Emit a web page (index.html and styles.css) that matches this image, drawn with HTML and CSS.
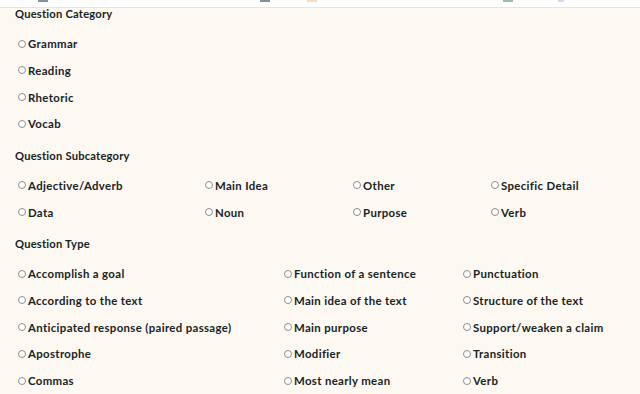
FILE: index.html
```html
<!DOCTYPE html>
<html lang="en">
<head>
<meta charset="utf-8">
<title>Question filters</title>
<link rel="stylesheet" href="styles.css">
</head>
<body>
<div class="topbar">
  <span class="mark mark-slate m1"></span>
  <span class="mark mark-slate m2"></span>
  <span class="mark mark-peach m3"></span>
  <span class="mark mark-green m4"></span>
  <span class="mark mark-blue m5"></span>
</div>
<main class="filters">
  <section class="group">
    <h3 class="group-title">Question Category</h3>
    <div class="options options-cat">
      <label class="opt"><input type="radio" name="cat"><span>Grammar</span></label>
      <label class="opt"><input type="radio" name="cat"><span>Reading</span></label>
      <label class="opt"><input type="radio" name="cat"><span>Rhetoric</span></label>
      <label class="opt"><input type="radio" name="cat"><span>Vocab</span></label>
    </div>
  </section>
  <section class="group">
    <h3 class="group-title">Question Subcategory</h3>
    <div class="options options-sub">
      <label class="opt"><input type="radio" name="sub"><span>Adjective/Adverb</span></label>
      <label class="opt"><input type="radio" name="sub"><span>Main Idea</span></label>
      <label class="opt"><input type="radio" name="sub"><span>Other</span></label>
      <label class="opt"><input type="radio" name="sub"><span>Specific Detail</span></label>
      <label class="opt"><input type="radio" name="sub"><span>Data</span></label>
      <label class="opt"><input type="radio" name="sub"><span>Noun</span></label>
      <label class="opt"><input type="radio" name="sub"><span>Purpose</span></label>
      <label class="opt"><input type="radio" name="sub"><span>Verb</span></label>
    </div>
  </section>
  <section class="group">
    <h3 class="group-title">Question Type</h3>
    <div class="options options-type">
      <label class="opt"><input type="radio" name="type"><span>Accomplish a goal</span></label>
      <label class="opt"><input type="radio" name="type"><span>Function of a sentence</span></label>
      <label class="opt"><input type="radio" name="type"><span>Punctuation</span></label>
      <label class="opt"><input type="radio" name="type"><span>According to the text</span></label>
      <label class="opt"><input type="radio" name="type"><span>Main idea of the text</span></label>
      <label class="opt"><input type="radio" name="type"><span>Structure of the text</span></label>
      <label class="opt"><input type="radio" name="type"><span>Anticipated response (paired passage)</span></label>
      <label class="opt"><input type="radio" name="type"><span>Main purpose</span></label>
      <label class="opt"><input type="radio" name="type"><span>Support/weaken a claim</span></label>
      <label class="opt"><input type="radio" name="type"><span>Apostrophe</span></label>
      <label class="opt"><input type="radio" name="type"><span>Modifier</span></label>
      <label class="opt"><input type="radio" name="type"><span>Transition</span></label>
      <label class="opt"><input type="radio" name="type"><span>Commas</span></label>
      <label class="opt"><input type="radio" name="type"><span>Most nearly mean</span></label>
      <label class="opt"><input type="radio" name="type"><span>Verb</span></label>
    </div>
  </section>
</main>
</body>
</html>
```

FILE: styles.css
```css
html, body {
  margin: 0;
  padding: 0;
}
body {
  background: #fdf8f2;
  color: #182425;
  font-family: "Lato", "Liberation Sans", sans-serif;
  overflow: hidden;
}
.topbar {
  height: 7px;
  background: #ffffff;
  border-bottom: 1px solid #ebe4dc;
  display: flex;
  align-items: flex-start;
}
.mark {
  display: block;
  height: 2px;
  width: 10px;
}
.mark-slate { background: #8492a0; }
.mark-peach { background: #f6dcc4; }
.mark-green { background: #93c6a8; }
.mark-blue { background: #cbdaf2; }
.m1 { margin-left: 38px; }
.m2 { margin-left: 212px; }
.m3 { margin-left: 37px; }
.m4 { margin-left: 186px; }
.m5 { margin-left: 45px; width: 6px; }

.filters {
  padding: 0 15px;
  display: flex;
  flex-direction: column;
  gap: 19px;
}
.group-title {
  margin: 0 0 16.5px 0;
  font-size: 11.2px;
  line-height: 12px;
  font-weight: 700;
  letter-spacing: 0.2px;
}
.options {
  display: grid;
  row-gap: 12.75px;
  padding-left: 2.5px;
}
.options-cat {
  grid-template-columns: 1fr;
}
.options-sub {
  grid-template-columns: 187px 148px 138px 1fr;
}
.options-type {
  grid-template-columns: 266px 179px 1fr;
}
.opt {
  display: flex;
  align-items: center;
  height: 14px;
  font-size: 11.4px;
  font-weight: 700;
  letter-spacing: 0.35px;
  white-space: nowrap;
}
.opt input {
  appearance: none;
  -webkit-appearance: none;
  margin: 0 2.5px 0 0;
  width: 8px;
  height: 8px;
  border: 1px solid #8f8f8f;
  border-radius: 50%;
  background: #ffffff;
  box-sizing: border-box;
  flex: none;
}
```
